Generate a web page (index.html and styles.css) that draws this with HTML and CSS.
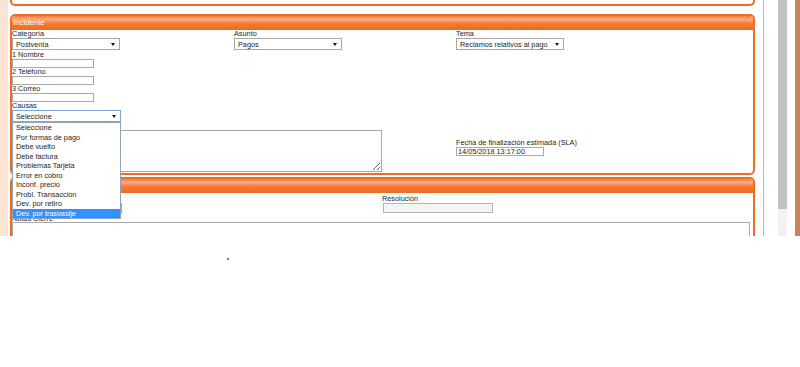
FILE: index.html
```html
<!DOCTYPE html>
<html>

<head>
  <meta charset="utf-8">
  <title>Incidente</title>
  <link rel="stylesheet" href="styles.css">
</head>

<body>
  <div class="screen">
    <div class="edge-left"></div>

    <div class="frame">
      <div class="panel panel-top"></div>

      <!-- datos del incidente -->
      <div class="panel">
        <div class="panel-head">Incidente</div>
        <div class="panel-body">
          <div class="grid3 first-row">
            <div class="field">
              <label>Categoría</label>
              <div class="select"><span>Postventa</span><span class="arrow"></span></div>
            </div>
            <div class="field">
              <label>Asunto</label>
              <div class="select"><span>Pagos</span><span class="arrow"></span></div>
            </div>
            <div class="field">
              <label>Tema</label>
              <div class="select"><span>Reclamos relativos al pago</span><span class="arrow"></span></div>
            </div>
          </div>

          <div class="field">
            <label>1 Nombre</label>
            <input type="text" class="short">
          </div>
          <div class="field">
            <label>2 Teléfono</label>
            <input type="text" class="short">
          </div>
          <div class="field">
            <label>3 Correo</label>
            <input type="text" class="short">
          </div>

          <div class="field causas">
            <label>Causas</label>
            <div class="select focus"><span>Seleccione</span><span class="arrow"></span></div>
            <ul class="options">
              <li>Seleccione</li>
              <li>Por formas de pago</li>
              <li>Debe vuelto</li>
              <li>Debe factura</li>
              <li>Problemas Tarjeta</li>
              <li>Error en cobro</li>
              <li>Inconf. precio</li>
              <li>Probl. Transacción</li>
              <li>Dev. por retiro</li>
              <li class="active">Dev. por trasvasije</li>
            </ul>
          </div>

          <div class="grid3 desc-row">
            <div class="field span2">
              <label></label>
              <textarea class="desc"></textarea>
            </div>
            <div class="field">
              <label>Fecha de finalización estimada (SLA)</label>
              <input type="text" class="date" value="14/05/2018 13:17:00">
            </div>
          </div>
        </div>
      </div>

      <!-- cierre (titulo y primer campo quedan bajo la lista) -->
      <div class="panel panel-close">
        <div class="panel-head"></div>
        <div class="panel-body close-body">
          <div class="grid2">
            <div class="field">
              <label></label>
              <div class="select small"><span></span><span class="arrow"></span></div>
            </div>
            <div class="field">
              <label>Resolución</label>
              <input type="text" class="resolution" disabled>
            </div>
          </div>
          <div class="field notes-field">
            <label>Notas Cierre</label>
            <textarea class="notes"></textarea>
          </div>
        </div>
      </div>
    </div>

    <div class="gutter"></div>
    <div class="scrollbar">
      <div class="thumb"></div>
    </div>
    <div class="gutter-right"></div>
    <div class="edge-right"></div>
  </div>

  <div class="dot"></div>
</body>

</html>
```

FILE: styles.css
```css
body {
  margin: 0;
  background: #fff;
  font-family: "Liberation Sans", Arial, sans-serif;
  font-size: 7.3px;
  color: #1e1e1e;
}

.screen {
  display: flex;
  height: 236px;
  overflow: hidden;
}

.edge-left {
  width: 8px;
  background: #fde3d2;
}

.frame {
  width: 745px;
  padding: 0 8px 0 2px;
  border-right: 1px solid #f5a878;
}

.gutter {
  width: 14px;
}

.scrollbar {
  width: 9px;
  background: #f1f1f1;
}

.scrollbar .thumb {
  height: 209px;
  background: #c1c1c1;
}

.gutter-right {
  width: 8px;
}

.edge-right {
  flex: 1;
  background: #c9825b;
}

/* paneles */
.panel {
  border: 2px solid #f26b21;
  border-radius: 5px;
  background: #fff;
  margin-top: 8px;
}

.panel-top {
  height: 4px;
  margin-top: 0;
  border-top: none;
  border-radius: 0 0 5px 5px;
}

.panel-close {
  margin-top: 2px;
}

.panel-head {
  height: 14px;
  line-height: 14px;
  padding-left: 1px;
  color: #fff;
  font-size: 7.8px;
  border-radius: 3px 3px 0 0;
  background: linear-gradient(#f4813d, #f8ac84 25%, #f47a32 55%, #ef6a1f);
}

.panel-body {
  padding-bottom: 1px;
}

.close-body {
  padding-top: 2px;
}

.grid3 {
  display: grid;
  grid-template-columns: 222px 222px 1fr;
}

.grid2 {
  display: grid;
  grid-template-columns: 370px 1fr;
}

.desc-row {
  align-items: center;
}

.span2 {
  grid-column: span 2;
}

.field label {
  display: block;
  height: 8px;
  line-height: 8px;
}

.notes-field label {
  line-height: 10px;
}

/* controles */
.select {
  box-sizing: border-box;
  width: 108px;
  height: 12px;
  padding: 0 4px 0 3px;
  border: 1px solid #a6a6a6;
  background: #fff;
  display: flex;
  justify-content: space-between;
  align-items: center;
}

.first-row {
  margin-bottom: 1px;
}

.select.focus {
  width: 109px;
  border-color: #7ea7d8;
}

.select.small {
  width: 110px;
  height: 11px;
}

.arrow {
  width: 0;
  height: 0;
  border-left: 2px solid transparent;
  border-right: 2px solid transparent;
  border-top: 3px solid #111;
}

input {
  display: block;
  box-sizing: border-box;
  margin: 0;
  padding: 0 1px;
  height: 9px;
  border: 1px solid #a9a9a9;
  font-family: inherit;
  font-size: 7.3px;
  color: #1e1e1e;
}

input.short {
  width: 82px;
}

input.date {
  width: 88px;
}

input.resolution {
  width: 110px;
  height: 10px;
  margin-left: 1px;
  background: #f4f4f4;
  border-color: #b5b5b5;
}

textarea {
  display: block;
  box-sizing: border-box;
  margin: 0;
  border: 1px solid #a9a9a9;
  font-family: inherit;
  font-size: 7.3px;
}

textarea.desc {
  width: 370px;
  height: 42px;
}

textarea.notes {
  width: 738px;
  height: 40px;
}

/* lista desplegada de causas */
.causas {
  position: relative;
}

.options {
  position: absolute;
  top: 20px;
  left: 0;
  z-index: 2;
  box-sizing: border-box;
  width: 109px;
  margin: 0;
  padding: 0;
  list-style: none;
  border: 1px solid #8fa3bd;
  background: #fff;
}

.options li {
  height: 9.5px;
  line-height: 9.5px;
  padding-left: 3px;
}

.options li.active {
  background: #3390ff;
  color: #fff;
}

.dot {
  width: 2px;
  height: 2px;
  margin: 22px 0 0 227px;
  background: #777;
}
```
